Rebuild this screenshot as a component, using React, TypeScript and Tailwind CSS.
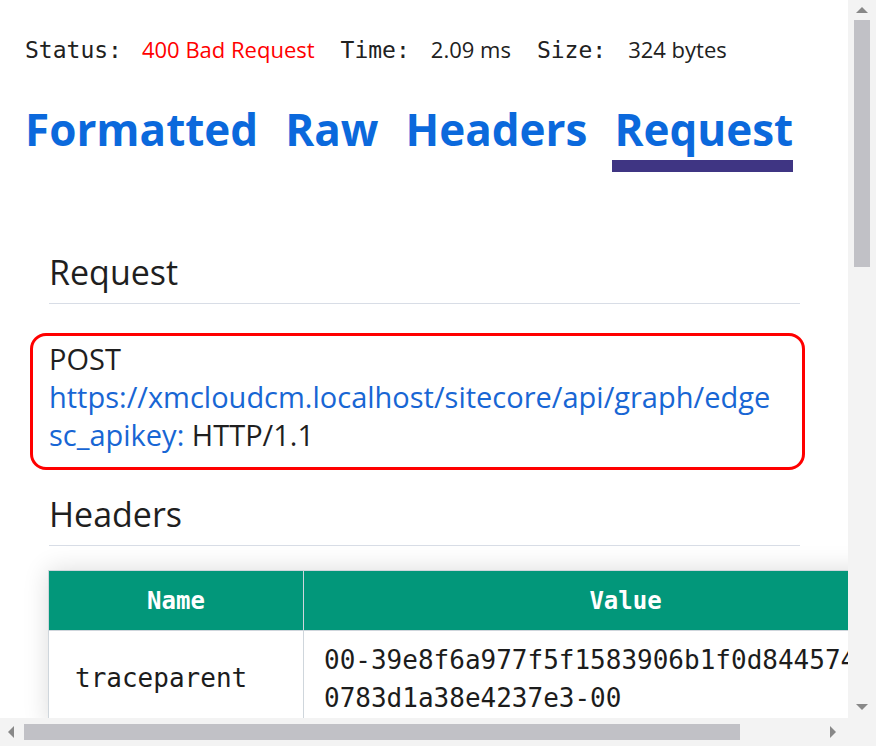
export default function App() {
  const sans = "font-['Open_Sans','Noto_Sans',sans-serif]";
  const mono = "font-['DejaVu_Sans_Mono','Liberation_Mono',monospace]";

  return (
    <div className="w-[876px] h-[746px] flex flex-col bg-white overflow-hidden">
      <div className="flex h-[718px]">
        <main className="w-[848px] h-[718px] overflow-hidden">
          <div className="w-[980px] pl-[25px] pt-[34px]">
            {/* status line */}
            <div className="flex items-baseline h-[30px] leading-[30px] text-[#212121]">
              <span className={`${mono} text-[23px]`}>Status:</span>
              <span className={`${sans} text-[22px] text-[#ff0000] ml-[20px]`}>400 Bad Request</span>
              <span className={`${mono} text-[23px] ml-[26px]`}>Time:</span>
              <span className={`${sans} text-[22px] ml-[21px]`}>2.09 ms</span>
              <span className={`${mono} text-[23px] ml-[26px]`}>Size:</span>
              <span className={`${sans} text-[22px] ml-[22px]`}>324 bytes</span>
            </div>

            {/* tabs */}
            <div className={`${sans} flex gap-[27px] mt-[43px] text-[44px] font-bold text-[#0b69dc]`}>
              <span className="leading-none">Formatted</span>
              <span className="leading-none">Raw</span>
              <span className="leading-none">Headers</span>
              <div className="flex flex-col">
                <span className="leading-none">Request</span>
                <div className="h-[12px] mt-[9px] -ml-[2px] bg-[#3f3583]" />
              </div>
            </div>

            {/* request section */}
            <section className={`${sans} ml-[24px] w-[751px] mt-[83px] text-[#1f1f1f]`}>
              <h2 className="text-[34px] leading-none pb-[14px] border-b border-[#d8dde6]">Request</h2>

              <div className="mt-[29px] -ml-[19px] w-[775px] border-[3px] border-[#ff0000] rounded-[16px] pl-[16px] pt-[4px] pb-[13px] text-[29px] leading-[38px]">
                <div>POST</div>
                <div className="text-[#1866d4]">https://xmcloudcm.localhost/sitecore/api/graph/edge</div>
                <div>
                  <span className="text-[#1866d4]">sc_apikey:</span> HTTP/1.1
                </div>
              </div>

              <h2 className="mt-[27px] text-[34px] leading-none pb-[14px] border-b border-[#d8dde6]">Headers</h2>
            </section>

            {/* headers table */}
            <table className={`${mono} ml-[23px] mt-[24px] w-[900px] border-collapse shadow-[0_0_24px_rgba(0,0,0,0.14)]`}>
              <thead>
                <tr className="bg-[#02977a] text-white text-[24px] font-bold h-[60px]">
                  <th className="w-[255px] border border-[#cfd6dc] font-bold">Name</th>
                  <th className="border border-[#cfd6dc] font-bold">Value</th>
                </tr>
              </thead>
              <tbody>
                <tr className="text-[26px] leading-[38px] text-[#1c1c1c]">
                  <td className="border border-[#cfd6dc] pl-[26px] align-middle">traceparent</td>
                  <td className="border border-[#cfd6dc] pl-[20px] pt-[10px] pb-[8px]">
                    00-39e8f6a977f5f1583906b1f0d844574c-
                    <br />
                    0783d1a38e4237e3-00
                  </td>
                </tr>
              </tbody>
            </table>
          </div>
        </main>

        {/* vertical scrollbar */}
        <div className="w-[28px] h-[718px] bg-[#f3f3f3] flex flex-col items-center">
          <svg width="14" height="10" viewBox="0 0 14 10" className="mt-[5px]">
            <polygon points="7,2 13,8 1,8" fill="#888" />
          </svg>
          <div className="w-[16px] h-[247px] mt-[5px] bg-[#c1c1c6]" />
          <div className="flex-1" />
          <svg width="14" height="10" viewBox="0 0 14 10" className="mb-[6px]">
            <polygon points="1,2 13,2 7,8" fill="#888" />
          </svg>
        </div>
      </div>

      {/* horizontal scrollbar */}
      <div className="h-[28px] flex items-center bg-[#f3f3f3]">
        <svg width="12" height="14" viewBox="0 0 10 14" className="ml-[5px]">
          <polygon points="8,1 8,13 2,7" fill="#888" />
        </svg>
        <div className="ml-[7px] w-[716px] h-[16px] bg-[#c1c1c6]" />
        <div className="flex-1" />
        <svg width="12" height="14" viewBox="0 0 10 14" className="mr-[37px]">
          <polygon points="2,1 2,13 8,7" fill="#888" />
        </svg>
      </div>
    </div>
  );
}
